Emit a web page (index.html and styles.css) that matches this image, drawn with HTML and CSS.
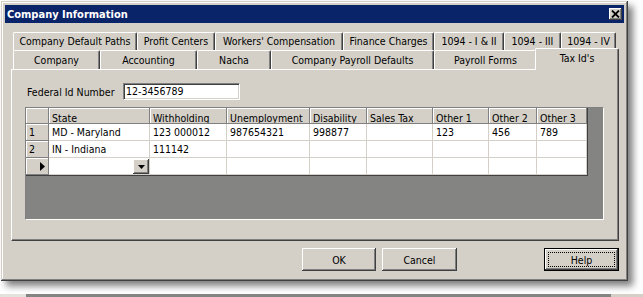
FILE: index.html
```html
<!DOCTYPE html>
<html lang="en">
<head>
    <meta charset="UTF-8">
    <title>Company Information</title>
    <link rel="stylesheet" href="styles.css">
</head>
<body>

<!-- Fenêtre de dialogue -->
<div class="window">
    <div class="titlebar">
        <span class="title">Company Information</span>
        <span class="close">
            <svg width="9" height="8" viewBox="0 0 9 8"><path d="M1 0.5 L8 7.5 M8 0.5 L1 7.5" stroke="#000" stroke-width="1.8"/></svg>
        </span>
    </div>

    <div class="content">
        <!-- Onglets arrière -->
        <div class="tabs tabs-back">
            <div class="tab">Company Default Paths</div>
            <div class="tab">Profit Centers</div>
            <div class="tab">Workers' Compensation</div>
            <div class="tab">Finance Charges</div>
            <div class="tab">1094 - I &amp; II</div>
            <div class="tab">1094 - III</div>
            <div class="tab">1094 - IV</div>
        </div>
        <!-- Onglets avant -->
        <div class="tabs tabs-front">
            <div class="tab">Company</div>
            <div class="tab">Accounting</div>
            <div class="tab">Nacha</div>
            <div class="tab">Company Payroll Defaults</div>
            <div class="tab">Payroll Forms</div>
            <div class="tab selected">Tax Id's</div>
        </div>

        <div class="panel">
            <div class="field">
                <label>Federal Id Number</label>
                <div class="input">12-3456789</div>
            </div>

            <!-- Grille des numéros -->
            <div class="grid">
                <div class="grid-table">
                    <div class="grid-row head">
                        <div class="cell hdr"></div>
                        <div class="cell hdr">State</div>
                        <div class="cell hdr">Withholding</div>
                        <div class="cell hdr">Unemployment</div>
                        <div class="cell hdr">Disability</div>
                        <div class="cell hdr">Sales Tax</div>
                        <div class="cell hdr">Other 1</div>
                        <div class="cell hdr">Other 2</div>
                        <div class="cell hdr">Other 3</div>
                    </div>
                    <div class="grid-row">
                        <div class="cell rowhdr">1</div>
                        <div class="cell">MD - Maryland</div>
                        <div class="cell">123 000012</div>
                        <div class="cell">987654321</div>
                        <div class="cell">998877</div>
                        <div class="cell"></div>
                        <div class="cell">123</div>
                        <div class="cell">456</div>
                        <div class="cell">789</div>
                    </div>
                    <div class="grid-row">
                        <div class="cell rowhdr">2</div>
                        <div class="cell">IN - Indiana</div>
                        <div class="cell">111142</div>
                        <div class="cell"></div>
                        <div class="cell"></div>
                        <div class="cell"></div>
                        <div class="cell"></div>
                        <div class="cell"></div>
                        <div class="cell"></div>
                    </div>
                    <div class="grid-row">
                        <div class="cell rowhdr pointer">
                            <svg width="5" height="9" viewBox="0 0 5 9"><path d="M0 0 L5 4.5 L0 9 Z" fill="#000"/></svg>
                        </div>
                        <div class="cell combo">
                            <span class="drop">
                                <svg width="7" height="4" viewBox="0 0 7 4"><path d="M0 0 H7 L3.5 4 Z" fill="#000"/></svg>
                            </span>
                        </div>
                        <div class="cell"></div>
                        <div class="cell"></div>
                        <div class="cell"></div>
                        <div class="cell"></div>
                        <div class="cell"></div>
                        <div class="cell"></div>
                        <div class="cell"></div>
                    </div>
                </div>
            </div>
        </div>

        <div class="buttons">
            <button>OK</button>
            <button>Cancel</button>
            <button class="default">Help</button>
        </div>
    </div>
</div>

<!-- Fenêtre en dessous -->
<div class="behind"></div>

</body>
</html>
```

FILE: styles.css
```css
/* Style général */
body {
    margin: 0;
    width: 643px;
    height: 297px;
    overflow: hidden;
    background-color: #fff;
    font-family: "DejaVu Sans Condensed", "DejaVu Sans", sans-serif;
    font-size: 10.5px;
    color: #000;
}

/* Fenêtre */
.window {
    box-sizing: border-box;
    width: 627px;
    height: 280px;
    margin: 1px 0 0 1px;
    padding: 4px;
    background-color: #d4d0c8;
    box-shadow: inset -1px -1px #404040, inset 1px 1px #d4d0c8,
                inset -2px -2px #808080, inset 2px 2px #fff,
                5px 5px 7px rgba(0, 0, 0, 0.5);
}

/* Barre de titre */
.titlebar {
    height: 18px;
    background-color: #0a246a;
    display: flex;
    align-items: center;
    justify-content: space-between;
    padding: 0 2px;
}

.title {
    color: #fff;
    font-weight: bold;
    font-size: 11px;
}

.close {
    box-sizing: border-box;
    width: 13px;
    height: 12px;
    background-color: #d4d0c8;
    box-shadow: inset -1px -1px #404040, inset 1px 1px #fff, inset -2px -2px #808080;
    display: flex;
    align-items: center;
    justify-content: center;
    padding-bottom: 1px;
}

.close svg {
    display: block;
}

/* Contenu */
.content {
    padding: 9px 5px 0 6px;
}

/* Onglets */
.tabs {
    display: grid;
    padding-left: 2px;
}

.tabs-back {
    height: 18px;
    grid-template-columns: 124px 78px 128px 91px 70px 57px 55px;
}

.tabs-front {
    height: 19px;
    grid-template-columns: 87px 97px 74px 163px 103px 81px;
}

.tab {
    box-sizing: border-box;
    border-top: 1px solid #fff;
    border-left: 1px solid #fff;
    border-right: 1px solid #404040;
    box-shadow: inset -1px 0 #808080;
    border-radius: 2px 2px 0 0;
    background-color: #d4d0c8;
    text-align: center;
    white-space: nowrap;
    overflow: hidden;
    padding-top: 2px;
}

.tabs-front .tab {
    padding-top: 3px;
}

.tab.selected {
    position: relative;
    z-index: 1;
    margin: -2px -1px -1px -2px;
    padding-top: 3px;
}

/* Panneau */
.panel {
    box-sizing: border-box;
    height: 172px;
    border: 1px solid;
    border-color: #fff #404040 #404040 #fff;
    box-shadow: inset -1px -1px #808080;
    padding: 13px 0 0 13px;
}

.field {
    display: flex;
    align-items: center;
    height: 17px;
}

.field label {
    width: 96px;
    margin-left: 2px;
}

.input {
    box-sizing: border-box;
    width: 117px;
    height: 17px;
    background-color: #fff;
    border: 1px solid;
    border-color: #808080 #fff #fff #808080;
    box-shadow: inset 1px 1px #404040, inset -1px -1px #d4d0c8;
    padding: 1px 0 0 2px;
    line-height: 13px;
}

/* Grille */
.grid {
    box-sizing: border-box;
    width: 579px;
    height: 113px;
    margin-top: 7px;
    background-color: #848482;
    border: 1px solid;
    border-color: #808080 #fff #fff #808080;
}

.grid-table {
    width: max-content;
    border-right: 1px solid #404040;
    border-bottom: 1px solid #404040;
}

.grid-row {
    display: grid;
    grid-template-columns: 23px 101px 77px 83px 57px 66px 56px 48px 50px;
    height: 17px;
}

.grid-row.head {
    height: 16px;
}

.cell {
    box-sizing: border-box;
    background-color: #fff;
    border-right: 1px solid #d4d0c8;
    border-bottom: 1px solid #d4d0c8;
    padding: 0 0 0 3px;
    line-height: 16px;
    white-space: nowrap;
    overflow: hidden;
}

.cell.hdr,
.cell.rowhdr {
    background-color: #d4d0c8;
    border-right-color: #808080;
    border-bottom-color: #808080;
    box-shadow: inset 1px 1px #fff;
}

.cell.hdr {
    padding-top: 3px;
    line-height: 15px;
}

.cell.pointer {
    display: flex;
    align-items: center;
    padding-left: 14px;
}

.cell.combo {
    display: flex;
    justify-content: flex-end;
    align-items: flex-start;
    padding: 1px 0 0 0;
}

.drop {
    box-sizing: border-box;
    width: 16px;
    height: 15px;
    background-color: #d4d0c8;
    box-shadow: inset -1px -1px #404040, inset 1px 1px #fff, inset -2px -2px #808080;
    display: flex;
    align-items: center;
    justify-content: center;
}

/* Boutons */
.buttons {
    display: flex;
    gap: 6px;
    padding-left: 291px;
    margin-top: 7px;
}

button {
    box-sizing: border-box;
    width: 75px;
    height: 23px;
    padding: 0;
    border: none;
    background-color: #d4d0c8;
    box-shadow: inset -1px -1px #404040, inset 1px 1px #fff, inset -2px -2px #808080;
    font-family: inherit;
    font-size: 10.5px;
    color: #000;
}

button:first-child {
    width: 74px;
}

button.default {
    margin-left: auto;
    border: 1px solid #000;
    outline: 1px dotted #000;
    outline-offset: -5px;
}

/* Fenêtre derrière */
.behind {
    height: 3px;
    margin-top: 13px;
    background: linear-gradient(to right, #e4e2dc 0 26px, #848482 26px 611px, #d4d0c8 611px);
}
```
